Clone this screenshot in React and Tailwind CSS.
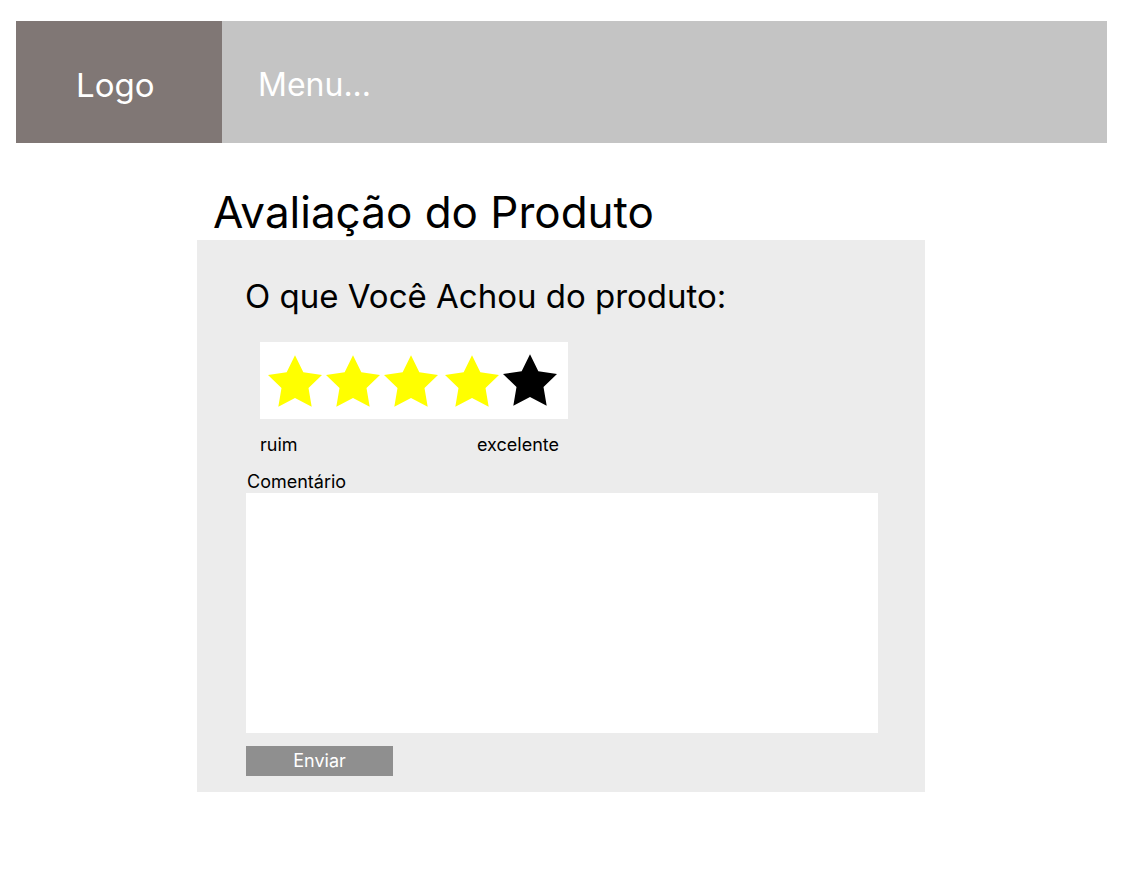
import React from "react";

function Star({ color, className = "" }) {
  return (
    <svg width="54" height="52" viewBox="2 2 20 19.02" className={"block shrink-0 " + className}>
      <polygon
        points="12,2 15.09,8.26 22,9.27 17,14.14 18.18,21.02 12,17.77 5.82,21.02 7,14.14 2,9.27 8.91,8.26"
        fill={color}
      />
    </svg>
  );
}

export default function App() {
  const font = { fontFamily: "Inter, 'Noto Sans', sans-serif" };
  return (
    <div className="w-[1123px] min-h-[890px] bg-white" style={font}>
      <header className="mx-[16px] mt-[21px] flex h-[122px]">
        <div className="w-[206px] h-full bg-[#807775] flex items-center pl-[60px]">
          <span className="text-white text-[33px] leading-[40px] pt-[6px]">Logo</span>
        </div>
        <div className="flex-1 h-full bg-[#c4c4c4] flex items-center pl-[36px]">
          <span className="text-white text-[32px] leading-[40px] pt-[5px]">Menu...</span>
        </div>
      </header>

      <main className="ml-[197px] w-[728px] mt-[47px]">
        <h1 className="pl-[16px] text-[44px] leading-[44px] text-black font-normal">
          Avaliação do Produto
        </h1>
        <section className="mt-[6px] bg-[#ececec] h-[552px] pl-[48px] pt-[36px] flex flex-col">
          <h2 className="text-[33px] leading-[40px] text-black">O que Você Achou do produto:</h2>
          <div className="ml-[15px] mt-[26px] w-[308px] h-[77px] bg-white flex items-center pl-[8px]">
            <Star color="#ffff00" />
            <Star color="#ffff00" className="ml-[4px]" />
            <Star color="#ffff00" className="ml-[4px]" />
            <Star color="#ffff00" className="ml-[7px]" />
            <Star color="#000000" className="ml-[4px] -mt-[2px]" />
          </div>
          <div className="ml-[15px] mt-[15px] w-[299px] flex justify-between text-[18px] leading-[22px] text-black">
            <span>ruim</span>
            <span>excelente</span>
          </div>
          <label className="ml-[2px] mt-[15px] text-[18px] leading-[22px] text-black">Comentário</label>
          <textarea className="ml-[1px] w-[632px] h-[240px] bg-white resize-none outline-none border-0 block" />
          <button className="mt-[13px] ml-[1px] w-[147px] h-[30px] bg-[#8f8f8f] text-white text-[18px] leading-[30px]">
            Enviar
          </button>
        </section>
      </main>
    </div>
  );
}
